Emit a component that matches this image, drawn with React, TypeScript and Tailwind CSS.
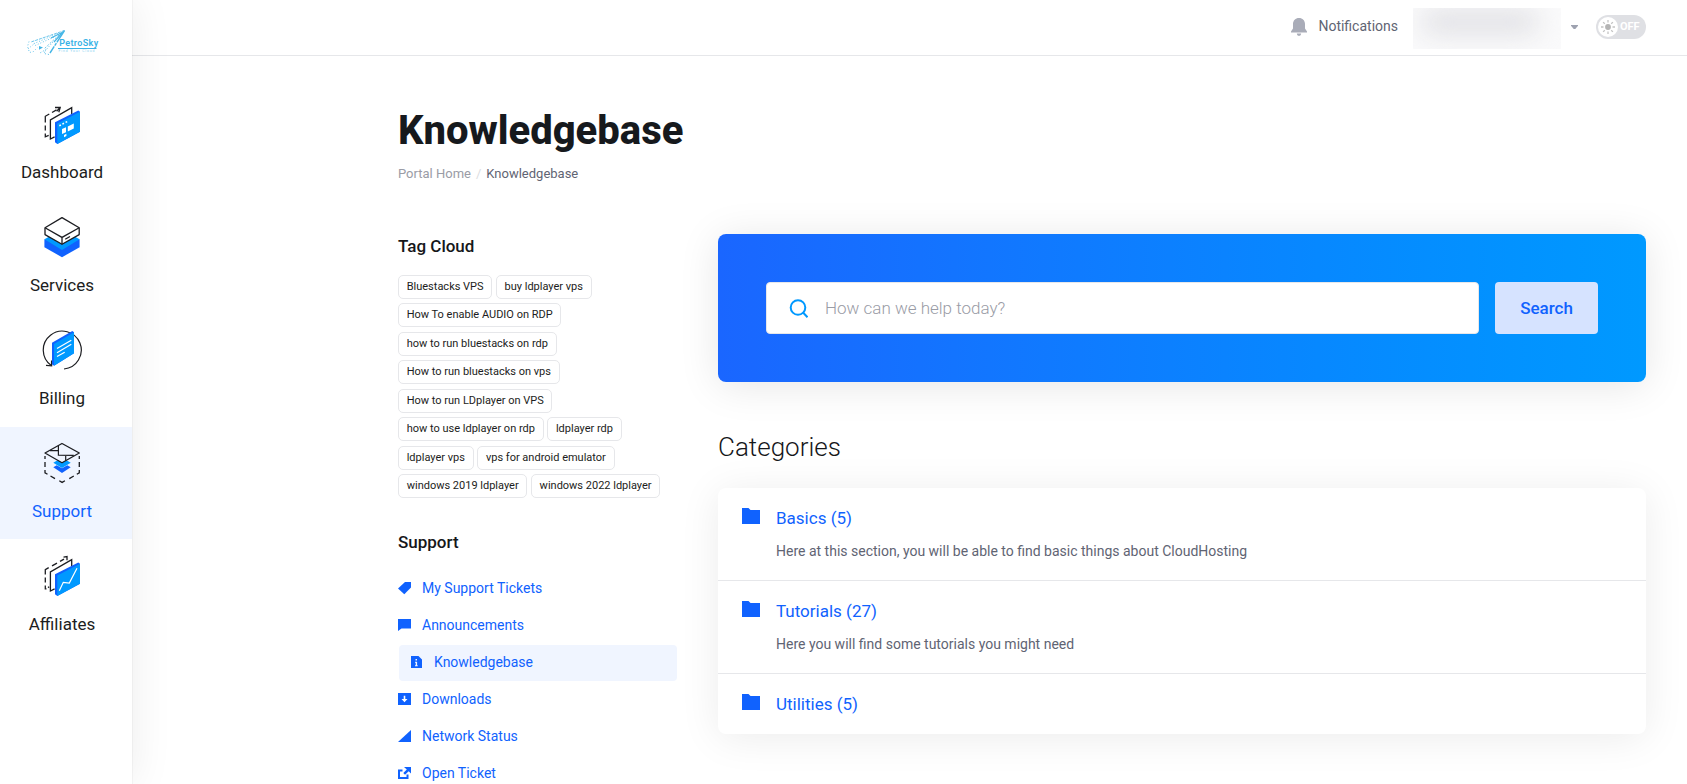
import type { ReactNode } from "react";

const DashboardIcon = () => (
  <svg width="40" height="44" viewBox="0 0 40 44" fill="none">
    <path d="M3.3 20.5v-6.2l4-2.3M10 10.5l4.5-2.6M3.3 23.5v5M3.3 31.5v3.3l3.4-1.4" stroke="#1c1d21" strokeWidth="1.3" />
    <path d="M13 5.5h5.2l-1.4 4.8M18 5.8l-3.4 3.4" stroke="#1c1d21" strokeWidth="1.3" />
    <path d="M12.6 34.9 8.4 37V18l21.3-12.3V12" stroke="#1c1d21" strokeWidth="1.3" />
    <path d="M13 20.3 36.3 8.5l1.7 1.3v19.9L15.3 42 13 40.3z" fill="#1062fe" />
    <path d="M15.3 21.6 38 9.8v19.9L15.3 42z" fill="#0099ff" />
    <path d="M17.3 23.8l1.6-.8M20.4 22.1l1.6-.8M23.6 20.4l1.6-.8" stroke="#fff" strokeWidth="1.6" />
    <path d="M20 27l4-1.8v5l-4 1.8zM25.8 24.6l6-3v5l-6 3zM22 33l2.4-1.2v2.2L22 35.2z" fill="#fff" />
  </svg>
);

const ServicesIcon = () => (
  <svg width="40" height="44" viewBox="0 0 40 44" fill="none">
    <path d="M2.4 24.2 37.6 24.2v8.1L20 42.2 2.4 32.3z" fill="#1062fe" />
    <path d="M2.4 24.2 6.5 22h27l4.1 2.2L20 35z" fill="#0099ff" />
    <path d="M3 12.7 20 2.6l17.2 10.1v6.9L20 29.3 3 19.6z" fill="#fff" stroke="#1c1d21" strokeWidth="1.3" strokeLinejoin="round" />
    <path d="M3 12.7l17 9.7 17.2-9.7M20 22.4v6.9M23.2 24.3l4.8-2.8" stroke="#1c1d21" strokeWidth="1.3" />
  </svg>
);

const BillingIcon = () => (
  <svg width="40" height="44" viewBox="0 0 40 44" fill="none">
    <path d="M22 41A19 19 0 1 0 9.3 37.6" stroke="#1c1d21" strokeWidth="1.2" />
    <path d="M4 37.3l5.6.6V32.6" stroke="#1c1d21" strokeWidth="1.3" />
    <path d="M10 14.7 30.3 3 32 4.3v21L12 37.7l-2-1.4z" fill="#1062fe" />
    <path d="M12 15.9 32 4.3v21L12 37.7z" fill="#0099ff" />
    <path d="M15 20.6l14.3-8.4M15 24.7l14.3-8.4M15 28.6l7.7-4.4" stroke="#fff" strokeWidth="1.2" />
  </svg>
);

const SupportIcon = () => (
  <svg width="40" height="44" viewBox="0 0 40 44" fill="none">
    <path d="M3 15v3M37.3 15v3M3 21v5M37.3 21v5M3 29v2.8l2.5 1.5M37.3 29v2.8l-2.5 1.5M8.5 35l4.5 2.6M31.8 35l-4.5 2.6M17.3 39.8l2.8 1.6 2.8-1.6" stroke="#1c1d21" strokeWidth="1.3" />
    <path d="M11.3 26.3l3.4-2 5.3 3 5.3-3 3.4 2L20 32z" fill="#1062fe" />
    <path d="M11.3 21.8l3.4-2h10.6l3.4 2-8.7 5.3z" fill="#0099ff" />
    <path d="M3 12 20 2.5 37.3 12 20 21.7z" fill="#f0f5ff" stroke="#1c1d21" strokeWidth="1.3" strokeLinejoin="round" />
    <path d="M16.4 4.6v9.6l15.4.2M8 9.6h8.4M23.7 14.4v5" stroke="#1c1d21" strokeWidth="1.2" />
  </svg>
);

const AffiliatesIcon = () => (
  <svg width="40" height="44" viewBox="0 0 40 44" fill="none">
    <path d="M3.3 20.5v-4.9l3.4-2M10 11.9l5-2.8M18 7.4l4-2.3M3.3 23.5v5M3.3 31.5v3.3h1.2M6 33.6l1.2-.8M21.5 3.2l3.5-.6v3.7" stroke="#1c1d21" strokeWidth="1.3" />
    <path d="M12.6 34.9 8.4 37V18l21.3-12.3V12" stroke="#1c1d21" strokeWidth="1.3" />
    <path d="M13 20.3 36.3 8.5l1.7 1.3v19.9L15.3 42 13 40.3z" fill="#1062fe" />
    <path d="M15.3 21.6 38 9.8v19.9L15.3 42z" fill="#0099ff" />
    <path d="M17.3 36.7l4-8.4 6 .7L35 14.3" stroke="#fff" strokeWidth="1.2" />
  </svg>
);

const Logo = () => (
  <svg width="76" height="28" viewBox="0 0 76 28" fill="none">
    <g stroke="#45b6e6" strokeWidth="0.8">
      <path d="M39.5 1.5 25 24" strokeWidth="1.4" strokeDasharray="14 1 3 1" />
      <path d="M39.5 1.5 6 13" strokeDasharray="3 1" />
      <path d="M37.5 3.5 29 13M38 3 26 9" strokeWidth="1.2" />
      <path d="M34 6 19 20" strokeDasharray="2 1.5" />
      <path d="M33 4.5 8 15M29 8 9 17M28 13 20 22" strokeDasharray="1 1.8" />
      <path d="M4 12.5l-1.5 5 2 6 4-1 4-4M3 20l7-6" strokeDasharray="1 2" />
      <path d="M24 25.5l-5-1 2-4-7 4" strokeDasharray="1.2 1.8" />
    </g>
    <path d="M14 17l4 1.6-4 2.2z" fill="#45b6e6" />
    <text x="34.2" y="17.3" fontSize="9" fontWeight="600" fill="#39b3e6" textLength="39" fontFamily="Roboto, sans-serif">
      PetroSky
    </text>
    <path d="M33 19.5h38.5" stroke="#39b3e6" strokeWidth="1.2" />
    <text x="33.5" y="23.3" fontSize="3.4" fill="#8ed4f2" textLength="36" fontFamily="Roboto, sans-serif">
      Find Your Cloud
    </text>
  </svg>
);

const navItems: { label: string; icon: ReactNode; active?: boolean }[] = [
  { label: "Dashboard", icon: <DashboardIcon /> },
  { label: "Services", icon: <ServicesIcon /> },
  { label: "Billing", icon: <BillingIcon /> },
  { label: "Support", icon: <SupportIcon />, active: true },
  { label: "Affiliates", icon: <AffiliatesIcon /> },
];

const Sidebar = () => (
  <aside className="z-10 flex w-[132px] shrink-0 flex-col bg-white shadow-[0_0_1px_rgba(0,0,0,0.2),0_0_40px_rgba(0,0,0,0.08)]">
    <a className="mt-[29px] mb-[31px] ml-[25px]">
      <Logo />
    </a>
    <nav className="flex flex-col gap-px">
      {navItems.map((item) => (
        <a
          key={item.label}
          className={`flex h-28 flex-col items-center pt-3.5 pr-2 text-[17px] leading-6 ${
            item.active ? "bg-[#f0f5ff] text-[#1062fe]" : "text-[#1c1d21]"
          }`}
        >
          {item.icon}
          <span className="mt-3.5">{item.label}</span>
        </a>
      ))}
    </nav>
  </aside>
);

const Topbar = () => (
  <header className="flex h-14 shrink-0 items-start justify-end border-b border-[#e6e7ea] pr-[41px]">
    <svg className="mt-[18px]" width="16" height="18" viewBox="0 0 16 18" fill="#a9acb8">
      <path d="M8 0C4.5 0 2 2.6 2 6v4.5L0 13.6V14.5h16v-.9l-2-3.1V6c0-3.4-2.5-6-6-6zM5.8 15.5h4.4a2.2 2.4 0 0 1-4.4 0z" />
    </svg>
    <span className="mt-4 ml-[11px] text-sm leading-5 text-[#5f6473]">Notifications</span>
    <div className="mt-2 ml-[15px] h-[41px] w-[148px] overflow-hidden bg-[#fafafb]">
      <div className="mt-0.5 ml-2 h-6 w-[118px] rounded-full bg-[#e0e0e4] blur-[13px]" />
    </div>
    <svg className="mt-[25px] ml-2.5" width="7" height="4" viewBox="0 0 7 4" fill="#9ea2b0">
      <path d="M0 0h7v.8L4.3 4H2.7L0 .8z" />
    </svg>
    <div className="mt-[15px] ml-[18px] flex h-6 w-[50px] items-center rounded-full bg-[#dfe0e4] pl-0.5">
      <span className="flex size-5 items-center justify-center rounded-full bg-white">
        <svg width="16" height="16" viewBox="0 0 16 16" fill="#b4b4b4" stroke="#c4c4c4">
          <circle cx="8" cy="8" r="2.9" stroke="none" />
          <path d="M8 1v2.5M8 12.5V15M1 8h2.5M12.5 8H15M3.1 3.1l1.7 1.7M11.2 11.2l1.7 1.7M3.1 12.9l1.7-1.7M11.2 4.8l1.7-1.7" strokeWidth="1.3" />
        </svg>
      </span>
      <span className="mt-px ml-0.5 text-[11px] font-bold text-white">OFF</span>
    </div>
  </header>
);

const tags = [
  "Bluestacks VPS",
  "buy ldplayer vps",
  "How To enable AUDIO on RDP",
  "how to run bluestacks on rdp",
  "How to run bluestacks on vps",
  "How to run LDplayer on VPS",
  "how to use ldplayer on rdp",
  "ldplayer rdp",
  "ldplayer vps",
  "vps for android emulator",
  "windows 2019 ldplayer",
  "windows 2022 ldplayer",
];

const supportLinks = [
  { label: "My Support Tickets", path: "M7 0h6v5.5L6.3 12.2 0 6.5z" },
  { label: "Announcements", path: "M0 0h13v9.5H3.5L0 12z" },
  { label: "Knowledgebase", path: "M1 0h7.5L12 3.5V12H1zM5.5 3v1.5H7V3zM5 5.7v1h.7v2.6H5v1h2.7v-1H7.1V5.7z", active: true },
  { label: "Downloads", path: "M0 0h13v12H0zM5.7 2.8v3.2H3.5l3 3.2 3-3.2H7.3V2.8z" },
  { label: "Network Status", path: "M13 0v12H0z" },
  { label: "Open Ticket", path: "M0 2.5h4.5v2H2V10h6.5V7.5h2V12H0zM6 0h7v6.5l-2.3-2.3L7 7.8 5.3 6 8.8 2.4z" },
];

const SideColumn = () => (
  <div className="w-[279px] shrink-0">
    <h3 className="text-[17px] leading-6 font-medium text-[#16171a]">Tag Cloud</h3>
    <div className="mt-[17px] flex flex-wrap gap-x-[3.6px] gap-y-[4.49px]">
      {tags.map((tag) => (
        <a key={tag} className="h-6 rounded-[5px] border border-[#e6e7ea] px-[7.7px] text-[11px] leading-[22px] text-[#1c1d21]">
          {tag}
        </a>
      ))}
    </div>

    <h3 className="mt-[31.3px] text-[17px] leading-6 font-medium text-[#16171a]">Support</h3>
    <ul className="mt-[17px] flex flex-col gap-px">
      {supportLinks.map((link) => (
        <li
          key={link.label}
          className={`flex h-9 items-center text-sm text-[#1062fe] ${
            link.active ? "ml-px rounded bg-[#f0f5ff] pl-[11px]" : ""
          }`}
        >
          <svg width="13" height="13" viewBox="0 0 13 13" fill="currentColor" fillRule="evenodd">
            <path d={link.path} />
          </svg>
          <span className="mb-0.5 ml-[11px]">{link.label}</span>
        </li>
      ))}
    </ul>
  </div>
);

const categories = [
  { name: "Basics (5)", text: "Here at this section, you will be able to find basic things about CloudHosting" },
  { name: "Tutorials (27)", text: "Here you will find some tutorials you might need" },
  { name: "Utilities (5)", text: "" },
];

const App = () => {
  return (
    <div className="flex h-[784px] overflow-hidden bg-white font-['Roboto',sans-serif]">
      <Sidebar />
      <div className="flex min-w-0 flex-1 flex-col">
        <Topbar />
        <main className="pt-[50px] pr-[41px] pl-[266px]">
          <h1 className="text-[40px] leading-[50px] font-extrabold text-[#16191d]">Knowledgebase</h1>
          <div className="mt-2 flex gap-[5px] text-[13px] leading-5">
            <a className="text-[#9a9ca6]">Portal Home</a>
            <span className="text-[#dcdde1]">/</span>
            <span className="text-[#5f6473]">Knowledgebase</span>
          </div>

          <div className="mt-[50px] flex gap-[41px]">
            <SideColumn />
            <div className="min-w-0 flex-1">
              <div className="flex h-[148px] gap-4 rounded-lg bg-linear-to-r from-[#1a66ff] to-[#0099ff] p-12 shadow-[0_4px_40px_rgba(0,0,0,0.1)]">
                <div className="flex flex-1 items-center rounded border border-[#e6e7ea] bg-white pl-[22px]">
                  <svg width="19" height="19" viewBox="0 0 19 19" fill="none" stroke="#0099ff" strokeWidth="2">
                    <circle cx="9" cy="8.5" r="7.3" />
                    <path d="M14 13.5l4.5 4.7" />
                  </svg>
                  <input
                    type="text"
                    placeholder="How can we help today?"
                    className="ml-[17px] flex-1 pt-0.5 text-[17px] font-light placeholder:text-[#9a9ca6] focus:outline-none"
                  />
                </div>
                <button className="w-[103px] rounded bg-[#d6e3ff] pt-0.5 text-[17px] font-medium text-[#1062fe]">Search</button>
              </div>

              <h2 className="mt-[47px] text-[26px] leading-9 font-light text-[#16171a]">Categories</h2>

              <div className="mt-[23px] divide-y divide-[#e6e7ea] rounded-lg bg-white shadow-[0_4px_40px_rgba(0,0,0,0.08)]">
                {categories.map((category) => (
                  <div key={category.name} className="flex pt-[18px] pb-[18px] pl-6">
                    <svg className="mt-0.5" width="18" height="16" viewBox="0 0 18 16" fill="#1062fe">
                      <path d="M0 0h6.5l2 2H18v14H0z" />
                    </svg>
                    <div className="ml-4">
                      <a className="block text-[17px] leading-6 text-[#1062fe]">{category.name}</a>
                      {category.text && <p className="mt-[11px] mb-px text-sm leading-5 text-[#5f6473]">{category.text}</p>}
                    </div>
                  </div>
                ))}
              </div>
            </div>
          </div>
        </main>
      </div>
    </div>
  );
};

export default App;
